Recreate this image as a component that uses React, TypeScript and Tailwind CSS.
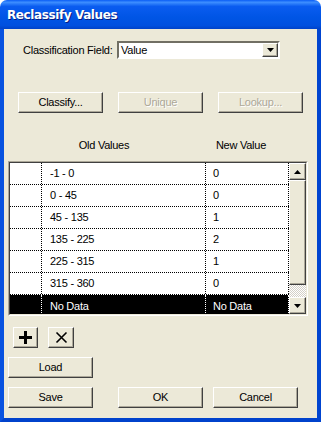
import React from 'react';

const font = "font-['Tahoma','Liberation_Sans',sans-serif]";

const raised =
  'bg-[#ECE9D8] border border-t-white border-l-white border-r-[#404040] border-b-[#404040] shadow-[inset_-1px_-1px_0_#ACA899]';

const Btn: React.FC<{ label: React.ReactNode; className?: string; disabled?: boolean }> = ({
  label,
  className = '',
  disabled,
}) => (
  <div className={`flex items-center justify-center ${raised} ${className}`}>
    <span
      className={
        disabled
          ? 'text-[#ACA899] [text-shadow:1px_1px_0_#ffffff]'
          : 'text-black'
      }
    >
      {label}
    </span>
  </div>
);

const Arrow = ({ down }: { down?: boolean }) => (
  <svg width="7" height="4" viewBox="0 0 7 4">
    {down ? <path d="M0 0h7L3.5 4z" fill="#000" /> : <path d="M0 4h7L3.5 0z" fill="#000" />}
  </svg>
);

const rows = [
  { from: '-1 - 0', to: '0' },
  { from: '0 - 45', to: '0' },
  { from: '45 - 135', to: '1' },
  { from: '135 - 225', to: '2' },
  { from: '225 - 315', to: '1' },
  { from: '315 - 360', to: '0' },
];

export default function App() {
  return (
    <div className={`w-[321px] h-[422px] flex flex-col text-[11px] leading-[13px] tracking-[-0.25px] whitespace-nowrap ${font}`}>
      {/* title bar */}
      <div className="h-[29px] shrink-0 rounded-t-[7px] flex items-center pl-[7px] pt-[2px] bg-[linear-gradient(180deg,#0A5DF5_0%,#3D8EFF_8%,#0A5CF0_22%,#0055E5_60%,#0050DF_88%,#0042C8_100%)]">
        <span className="text-white font-bold text-[12px] font-['DejaVu_Sans','Liberation_Sans',sans-serif] tracking-[-0.4px] [text-shadow:1px_1px_0_#0A1E80]">
          Reclassify Values
        </span>
      </div>

      {/* client area */}
      <div className="flex-1 flex flex-col bg-[#ECE9D8] border-l-4 border-r-4 border-b-4 border-l-[#0852E0] border-r-[#0044D0] border-b-[#0042CC]">
        {/* classification field */}
        <div className="flex items-center mt-[12px] ml-[19px] h-[18px]">
          <span className="w-[94px]">Classification Field:</span>
          <div className="w-[163px] h-[18px] bg-white border-2 border-t-[#716F64] border-l-[#716F64] border-r-white border-b-white flex items-center">
            <span className="flex-1 pl-[2px]">Value</span>
            <div className={`w-[16px] h-[14px] flex items-center justify-center ${raised}`}>
              <Arrow down />
            </div>
          </div>
        </div>

        {/* classify buttons */}
        <div className="flex gap-[15px] mt-[33px] ml-[14px]">
          <Btn label="Classify..." className="w-[85px] h-[21px]" />
          <Btn label="Unique" className="w-[85px] h-[21px]" disabled />
          <Btn label="Lookup..." className="w-[85px] h-[21px]" disabled />
        </div>

        {/* headers */}
        <div className="flex mt-[26px] ml-[50px] gap-[37px]">
          <span className="w-[100px] text-center">Old Values</span>
          <span className="w-[100px] text-center">New Value</span>
        </div>

        {/* table */}
        <div className="mt-[9px] ml-[4px] w-[300px] h-[155px] border border-t-[#ACA899] border-l-[#ACA899] border-r-white border-b-white">
          <div className="h-full border border-t-[#404040] border-l-[#404040] border-r-[#ECE9D8] border-b-[#ECE9D8] flex bg-white overflow-hidden">
            <div className="flex-1 flex flex-col">
              {rows.map((r) => (
                <div key={r.from} className="flex h-[22px] shrink-0 border-b border-dotted border-black">
                  <div className="w-[32px] border-r border-dotted border-black" />
                  <div className="w-[164px] border-r border-dotted border-black pl-[8px] flex items-center">
                    {r.from}
                  </div>
                  <div className="w-[83px] border-r border-dotted border-black pl-[7px] flex items-center">
                    {r.to}
                  </div>
                </div>
              ))}
              <div className="flex h-[22px] shrink-0 bg-black text-white">
                <div className="w-[32px] border-r border-dotted border-white" />
                <div className="w-[164px] border-r border-dotted border-white pl-[8px] flex items-center">
                  No Data
                </div>
                <div className="w-[83px] border-r border-dotted border-white pl-[7px] flex items-center">
                  No Data
                </div>
              </div>
            </div>
            {/* scrollbar */}
            <div className="w-[17px] flex flex-col">
              <div className={`h-[17px] shrink-0 flex items-center justify-center ${raised}`}>
                <Arrow />
              </div>
              <div className={`h-[105px] shrink-0 ${raised}`} />
              <div className="flex-1 bg-[repeating-conic-gradient(#ffffff_0_25%,#D4D0C8_0_50%)] bg-[length:2px_2px]" />
              <div className={`h-[17px] shrink-0 flex items-center justify-center ${raised}`}>
                <Arrow down />
              </div>
            </div>
          </div>
        </div>

        {/* add / remove */}
        <div className="flex gap-[10px] mt-[11px] ml-[9px]">
          <Btn
            className="w-[25px] h-[21px]"
            label={
              <svg width="13" height="13" viewBox="0 0 13 13" className="block">
                <path d="M5 0h3v5h5v3H8v5H5V8H0V5h5z" fill="#000" />
              </svg>
            }
          />
          <Btn
            className="w-[26px] h-[21px]"
            label={
              <svg width="13" height="13" viewBox="0 0 13 13" className="block">
                <path d="M1.5 1.5l10 10M11.5 1.5l-10 10" stroke="#000" strokeWidth="1.6" />
              </svg>
            }
          />
        </div>

        <div className="mt-[9px] ml-[4px]">
          <Btn label="Load" className="w-[85px] h-[21px]" />
        </div>

        <div className="flex mt-[9px] ml-[4px]">
          <Btn label="Save" className="w-[85px] h-[21px]" />
          <Btn label="OK" className="w-[85px] h-[21px] ml-[25px]" />
          <Btn label="Cancel" className="w-[85px] h-[21px] ml-[10px]" />
        </div>
      </div>
    </div>
  );
}
